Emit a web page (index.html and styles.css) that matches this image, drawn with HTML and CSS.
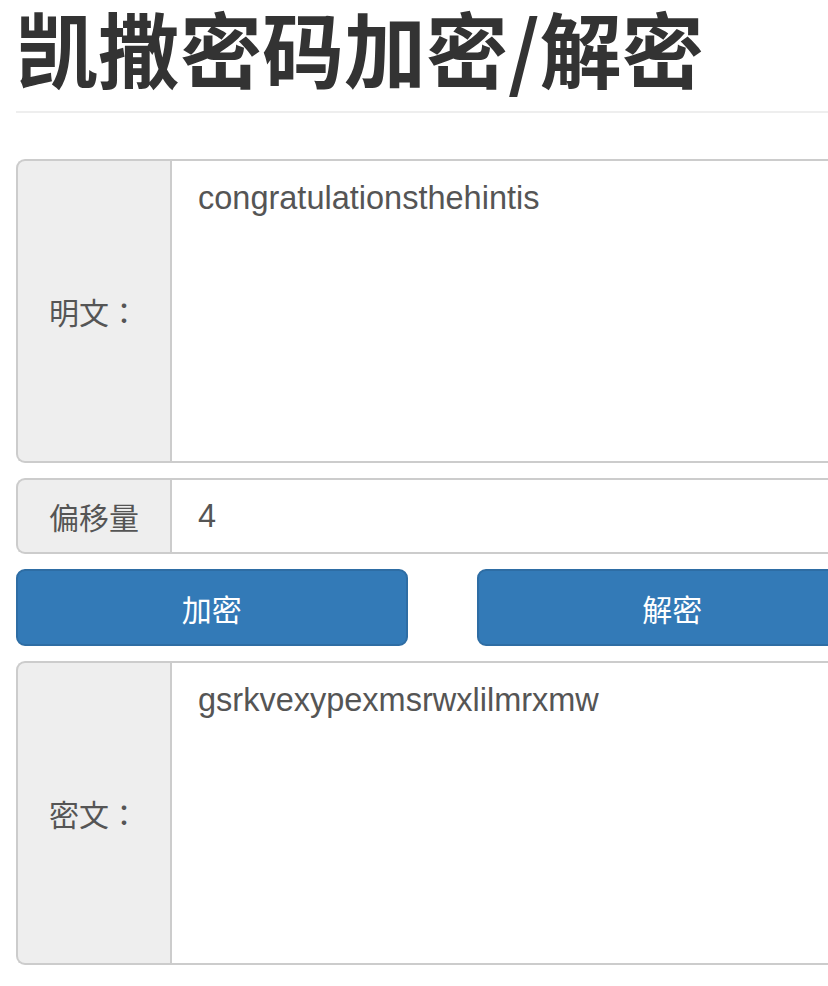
FILE: index.html
```html
<!DOCTYPE html>
<html lang="zh-CN">
<head>
	<meta charset="UTF-8">
	<meta name="viewport" content="width=device-width, initial-scale=1">
	<title>凯撒密码加密/解密</title>
	<link rel="stylesheet" href="styles.css">
</head>
<body>

	<div class="page">
		<h1 class="title">凯撒密码加密/解密</h1>
		<hr class="rule">

		<div class="field field-tall">
			<span class="addon" lang="ja">明文：</span>
			<textarea class="box" id="plain">congratulationsthehintis</textarea>
		</div>

		<div class="field field-short">
			<span class="addon">偏移量</span>
			<input class="box" type="text" id="shift" value="4">
		</div>

		<div class="actions">
			<button class="btn" onclick="run(1)">加密</button>
			<button class="btn" onclick="run(-1)">解密</button>
		</div>

		<div class="field field-tall">
			<span class="addon" lang="ja">密文：</span>
			<textarea class="box" id="cipher">gsrkvexypexmsrwxlilmrxmw</textarea>
		</div>
	</div>

	<script>
		function shiftChar(ch, n) {
			const code = ch.charCodeAt(0);
			if (code >= 97 && code <= 122) return String.fromCharCode((code - 97 + n + 26 * 10) % 26 + 97);
			if (code >= 65 && code <= 90) return String.fromCharCode((code - 65 + n + 26 * 10) % 26 + 65);
			return ch;
		}

		function run(dir) {
			const n = parseInt(document.getElementById("shift").value, 10) || 0;
			const plain = document.getElementById("plain");
			const cipher = document.getElementById("cipher");
			if (dir > 0) {
				cipher.value = plain.value.split("").map(c => shiftChar(c, n)).join("");
			} else {
				plain.value = cipher.value.split("").map(c => shiftChar(c, -n)).join("");
			}
		}
	</script>

</body>
</html>
```

FILE: styles.css
```css
html, body {
	overflow: hidden;
}
body {
	margin: 0;
	background: #fff;
	color: #333;
	font-family: "Liberation Sans", "Noto Sans CJK SC", sans-serif;
}
.page {
	width: 852px;
	padding-left: 16px;
}
.title {
	font-family: "Noto Sans CJK SC", sans-serif;
	font-size: 82px;
	font-weight: 700;
	line-height: 1.1;
	color: #333;
	margin: 0;
	padding-top: 2px;
}
.rule {
	border: 0;
	border-top: 2px solid #eee;
	margin: 19px 0 46px;
}
.field {
	display: flex;
	margin-bottom: 15px;
}
.field-tall {
	height: 304px;
}
.field-short {
	height: 76px;
}
.addon {
	width: 154px;
	box-sizing: border-box;
	display: flex;
	align-items: center;
	justify-content: center;
	background: #eee;
	border: 2px solid #ccc;
	border-right: 0;
	border-radius: 9px 0 0 9px;
	font-family: "Noto Sans CJK JP", "Noto Sans CJK SC", sans-serif;
	font-size: 30px;
	color: #555;
}
.box {
	flex: 1;
	box-sizing: border-box;
	margin: 0;
	border: 2px solid #ccc;
	border-radius: 0 9px 9px 0;
	background: #fff;
	font-family: "Liberation Sans", "Noto Sans CJK SC", sans-serif;
	font-size: 32.5px;
	line-height: 1.42857;
	color: #555;
	padding: 14px 26px;
	resize: none;
	outline: none;
}
.field-short .box {
	padding-top: 0;
	padding-bottom: 0;
}
.actions {
	display: flex;
	gap: 69px;
	margin-bottom: 15px;
}
.btn {
	width: 392px;
	height: 77px;
	background: #337ab7;
	border: 2px solid #2e6da4;
	border-radius: 9px;
	color: #fff;
	font-family: "Noto Sans CJK SC", sans-serif;
	font-size: 30px;
	cursor: pointer;
}
.btn:hover {
	background: #286090;
}
```
